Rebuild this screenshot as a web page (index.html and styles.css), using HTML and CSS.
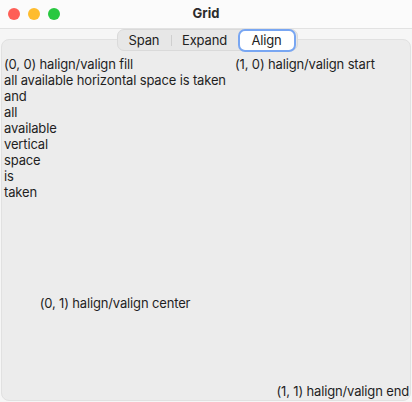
FILE: index.html
```html
<!DOCTYPE html>
<html>
<head>
<meta charset="utf-8">
<link rel="stylesheet" href="styles.css">
</head>
<body>
<div class="window">
  <div class="titlebar">
    <div class="lights">
      <span class="light red"></span>
      <span class="light yellow"></span>
      <span class="light green"></span>
    </div>
    <div class="title">Grid</div>
  </div>
  <div class="content">
    <div class="switcher-row">
      <div class="switcher">
        <div class="seg seg-span">Span</div>
        <div class="sep"></div>
        <div class="seg seg-expand">Expand</div>
        <div class="seg seg-align active">Align</div>
      </div>
    </div>
    <div class="panel">
      <div class="grid">
        <div class="cell c00">(0, 0) halign/valign fill<br>all available horizontal space is taken<br>and<br>all<br>available<br>vertical<br>space<br>is<br>taken</div>
        <div class="cell c10">(1, 0) halign/valign start</div>
        <div class="cell c01">(0, 1) halign/valign center</div>
        <div class="cell c11">(1, 1) halign/valign end</div>
      </div>
    </div>
  </div>
</div>
</body>
</html>
```

FILE: styles.css
```css
html, body {
  margin: 0;
  padding: 0;
  width: 412px;
  height: 402px;
  overflow: hidden;
  background: #f5f5f5;
  font-family: Inter, "Liberation Sans", sans-serif;
  font-size: 13px;
  letter-spacing: -0.15px;
  color: #1f1f1f;
}

.window {
  width: 412px;
  height: 402px;
  display: flex;
  flex-direction: column;
}

.titlebar {
  height: 28px;
  flex: none;
  background: #fbfbfb;
  border-bottom: 1px solid #e2e2e2;
  display: flex;
  align-items: center;
  justify-content: center;
  position: relative;
}

.lights {
  position: absolute;
  left: 8px;
  top: 8px;
  display: flex;
  gap: 8px;
}

.light {
  width: 12px;
  height: 12px;
  border-radius: 50%;
  display: block;
}
.red { background: #fe5f57; }
.yellow { background: #febc2e; }
.green { background: #28c840; }

.title {
  font-weight: 700;
  font-size: 13px;
  letter-spacing: 0;
  color: #2b2b2b;
  margin-top: -2px;
}

.content {
  flex: 1;
  display: flex;
  flex-direction: column;
  padding: 0 1px 1px 1px;
  background: #f6f6f6;
}

.switcher-row {
  display: flex;
  justify-content: center;
  position: relative;
  z-index: 1;
  height: 22px;
  padding-left: 2px;
}

.switcher {
  display: flex;
  align-items: center;
  height: 20px;
  background: #e7e7e7;
  border: 1px solid #dadada;
  border-radius: 7px;
  padding: 0 1px 0 0;
}

.seg {
  height: 20px;
  line-height: 20px;
  text-align: center;
  color: #222;
  font-size: 13px;
}

.seg-span { width: 53px; }
.seg-expand { width: 66px; }
.seg-align { width: 54px; }

.sep {
  width: 1px;
  height: 11px;
  background: #cfcfcf;
}

.active {
  background: #ffffff;
  border: 2px solid #78a6f2;
  border-radius: 7px;
  height: 19px;
  line-height: 19px;
  margin-top: -1px;
  margin-bottom: -1px;
  box-sizing: content-box;
}

.panel {
  flex: 1;
  margin-top: -12px;
  background: #ececec;
  border: 1px solid #e1e1e1;
  border-radius: 8px;
  padding: 16px 0 0 2px;
  display: flex;
}

.grid {
  flex: 1;
  display: grid;
  grid-template-columns: 222px 1fr;
  grid-template-rows: 150px 1fr;
  column-gap: 9px;
  line-height: 16px;
}

.cell {
  white-space: nowrap;
}

.c00 {
  justify-self: stretch;
  align-self: stretch;
}

.c10 {
  justify-self: start;
  align-self: start;
}

.c01 {
  justify-self: center;
  align-self: center;
}

.c11 {
  justify-self: end;
  align-self: end;
  padding-right: 1px;
  padding-bottom: 1px;
}
```
